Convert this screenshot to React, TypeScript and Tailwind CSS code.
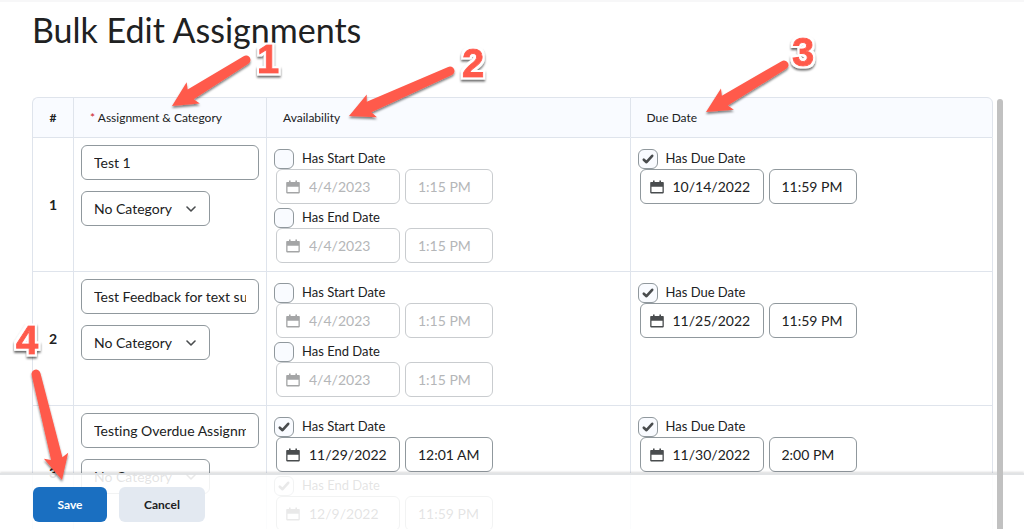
import { useState } from "react";

type DateValue = { label: string; date: string; time: string; enabled: boolean };
type Assignment = { name: string; start: DateValue; end: DateValue; due: DateValue };

const assignments: Assignment[] = [
  {
    name: "Test 1",
    start: { label: "Has Start Date", date: "4/4/2023", time: "1:15 PM", enabled: false },
    end: { label: "Has End Date", date: "4/4/2023", time: "1:15 PM", enabled: false },
    due: { label: "Has Due Date", date: "10/14/2022", time: "11:59 PM", enabled: true },
  },
  {
    name: "Test Feedback for text submission",
    start: { label: "Has Start Date", date: "4/4/2023", time: "1:15 PM", enabled: false },
    end: { label: "Has End Date", date: "4/4/2023", time: "1:15 PM", enabled: false },
    due: { label: "Has Due Date", date: "11/25/2022", time: "11:59 PM", enabled: true },
  },
  {
    name: "Testing Overdue Assignments",
    start: { label: "Has Start Date", date: "11/29/2022", time: "12:01 AM", enabled: true },
    end: { label: "Has End Date", date: "12/9/2022", time: "11:59 PM", enabled: true },
    due: { label: "Has Due Date", date: "11/30/2022", time: "2:00 PM", enabled: true },
  },
];

function CalendarIcon() {
  return (
    <svg viewBox="0 0 14 14" className="h-3.5 w-3.5 shrink-0" fill="currentColor" aria-hidden="true">
      <path d="M3 0.5h1.6V2h4.8V0.5H11V2h2a.8.8 0 0 1 .8.8V12.6a.8.8 0 0 1-.8.8H1a.8.8 0 0 1-.8-.8V2.8A.8.8 0 0 1 1 2h2zM1.5 6.7v5.4h11V6.7z" fillRule="evenodd" />
    </svg>
  );
}

function DateField({ id, value }: { id: string; value: DateValue }) {
  const [enabled, setEnabled] = useState(value.enabled);
  const [date, setDate] = useState(value.date);
  const [time, setTime] = useState(value.time);
  const tone = enabled ? "border-[#90989d] text-[#202122]" : "border-[#c9cccf] text-[#b4b6b8]";
  return (
    <div>
      <div className="flex h-6 items-start gap-2">
        <span className="mt-1 grid h-5 w-5 shrink-0">
          <input
            id={id}
            type="checkbox"
            checked={enabled}
            onChange={(e) => setEnabled(e.target.checked)}
            className="col-start-1 row-start-1 h-5 w-5 appearance-none rounded-md border border-[#90989d] bg-[#f9fbff]"
          />
          {enabled && (
            <svg viewBox="0 0 20 20" className="pointer-events-none col-start-1 row-start-1 h-5 w-5" fill="none" stroke="#494c4e" strokeWidth="2.6" strokeLinecap="round" strokeLinejoin="round" aria-hidden="true">
              <path d="M5.8 10.7 8.5 13.2 14.2 6.8" />
            </svg>
          )}
        </span>
        <label htmlFor={id} className="pt-[3px] text-[13px] leading-5 text-[#202122]">{value.label}</label>
      </div>
      <div className="flex gap-[5px] pl-0.5">
        <div className={`flex h-[35px] w-[124px] items-center gap-[9px] rounded-md border bg-white pl-[9px] ${tone}`}>
          <span className={enabled ? "text-[#494c4e]" : "text-[#a4a5a6]"}><CalendarIcon /></span>
          <input aria-label={`${value.label}: date`} value={date} disabled={!enabled} onChange={(e) => setDate(e.target.value)} className="w-full min-w-0 bg-transparent text-sm outline-none" />
        </div>
        <input aria-label={`${value.label}: time`} value={time} disabled={!enabled} onChange={(e) => setTime(e.target.value)} className={`h-[35px] w-[88px] rounded-md border bg-white px-3 text-sm outline-none ${tone}`} />
      </div>
    </div>
  );
}

function AssignmentRow({ item, index }: { item: Assignment; index: number }) {
  const [name, setName] = useState(item.name);
  const cell = "border-b border-l border-[#dfe4ec] px-[7px] pt-[7px] pb-2 align-top";
  return (
    <tr>
      <th scope="row" className="border-b border-l border-[#dfe4ec] text-center align-middle text-sm font-bold">{index + 1}</th>
      <td className={cell}>
        <div className="flex flex-col items-start gap-[11px]">
          <div className="flex h-[35px] w-full items-center rounded-md border border-[#90989d] bg-white px-3">
            <input aria-label="Assignment name" value={name} onChange={(e) => setName(e.target.value)} className="w-full min-w-0 bg-transparent text-sm outline-none" />
          </div>
          <div className="grid w-[129px] items-center">
            <select aria-label="Category" className="col-start-1 row-start-1 h-[35px] w-full appearance-none rounded-md border border-[#90989d] bg-white px-3 text-sm">
              <option>No Category</option>
            </select>
            <svg viewBox="0 0 10 6" className="pointer-events-none col-start-1 row-start-1 mr-3.5 h-1.5 w-2.5 justify-self-end" fill="none" stroke="#494c4e" strokeWidth="1.6" strokeLinecap="round" strokeLinejoin="round" aria-hidden="true">
              <path d="M1 1l4 4 4-4" />
            </svg>
          </div>
        </div>
      </td>
      <td className={cell}>
        <DateField id={`start-${index}`} value={item.start} />
        <DateField id={`end-${index}`} value={item.end} />
      </td>
      <td className="border-x border-b border-[#dfe4ec] px-[7px] pt-[7px] pb-2 align-top">
        <DateField id={`due-${index}`} value={item.due} />
      </td>
    </tr>
  );
}

type Callout = { n: string; labelX: number; labelY: number; tail: [number, number]; tip: [number, number] };

const callouts: Callout[] = [
  { n: "1", labelX: 268, labelY: 73, tail: [246, 60], tip: [172, 106] },
  { n: "2", labelX: 473, labelY: 77, tail: [450, 71], tip: [349, 116] },
  { n: "3", labelX: 803, labelY: 66, tail: [784, 65], tip: [706, 112] },
  { n: "4", labelX: 27, labelY: 354, tail: [36, 374], tip: [62, 480] },
];

function Callouts() {
  return (
    <svg width="1024" height="529" viewBox="0 0 1024 529" className="pointer-events-none absolute -top-0.5 left-0 z-30">
      <defs>
        <filter id="shadow" x="-20%" y="-20%" width="140%" height="150%">
          <feDropShadow dx="0" dy="2" stdDeviation="1" floodColor="#000" floodOpacity="0.5" />
        </filter>
        <filter id="outline" x="-50%" y="-50%" width="200%" height="200%">
          <feMorphology in="SourceAlpha" operator="dilate" radius="2" result="grown" />
          <feFlood floodColor="#fff" />
          <feComposite in2="grown" operator="in" result="edge" />
          <feMerge result="figure">
            <feMergeNode in="edge" />
            <feMergeNode in="SourceGraphic" />
          </feMerge>
          <feDropShadow in="figure" dx="0" dy="2" stdDeviation="0.8" floodColor="#000" floodOpacity="0.6" />
        </filter>
      </defs>
      {callouts.map(({ n, labelX, labelY, tail, tip }) => {
        const dx = tip[0] - tail[0];
        const dy = tip[1] - tail[1];
        const len = Math.hypot(dx, dy);
        const angle = (Math.atan2(dy, dx) * 180) / Math.PI;
        return (
          <g key={n}>
            <g filter="url(#shadow)">
              <path
                transform={`translate(${tail[0]} ${tail[1]}) rotate(${angle})`}
                d={`M0 -4.5 L${len - 22} -5.8 L${len - 25} -12.5 L${len} 0 L${len - 25} 12.5 L${len - 22} 5.8 L0 4.5 A4.5 4.5 0 0 1 0 -4.5Z`}
                fill="#ff5a4b"
              />
            </g>
            <text x={labelX} y={labelY} textAnchor="middle" fontFamily="Liberation Sans, Arial, sans-serif" fontWeight="700" fontSize="40" fill="#ff5a4b" stroke="#ff5a4b" strokeWidth="1" filter="url(#outline)">
              {n}
            </text>
          </g>
        );
      })}
    </svg>
  );
}

export default function App() {
  const head = "h-10 border-y border-l border-[#dfe4ec] bg-[#f9fbff] px-4 text-left text-xs font-normal";
  return (
    <div className="relative h-screen overflow-hidden border-t-2 border-[#f7f7f8] bg-white font-['Lato',sans-serif] text-[#202122] [font-variant-ligatures:none]">
      <h1 className="px-8 pt-[7px] text-[34px] leading-[42px]">Bulk Edit Assignments</h1>
      <main className="mt-[46px] flex gap-1 pr-[21px] pl-8">
        <table className="w-full flex-1 table-fixed border-separate border-spacing-0">
          <colgroup>
            <col className="w-[41px]" />
            <col className="w-[193px]" />
            <col />
            <col />
          </colgroup>
          <thead>
            <tr>
              <th scope="col" className="h-[41px] rounded-tl-md border-y border-l border-[#dfe4ec] bg-[#f9fbff] text-center text-xs font-bold">#</th>
              <th scope="col" className={head}><span className="text-[#cd2026]">*</span> Assignment &amp; Category</th>
              <th scope="col" className={head}>Availability</th>
              <th scope="col" className="rounded-tr-md border border-[#dfe4ec] bg-[#f9fbff] px-4 text-left text-xs font-normal">Due Date</th>
            </tr>
          </thead>
          <tbody>
            {assignments.map((item, i) => (
              <AssignmentRow key={item.name} item={item} index={i} />
            ))}
          </tbody>
        </table>
        <div className="z-20 mt-0.5 w-1.5 rounded-full bg-[#c1c1c1]" />
      </main>
      <footer className="fixed inset-x-0 bottom-0 z-10 flex h-14 gap-3 border-t-2 border-[#d9dcdf]/80 bg-white/88 px-[33px] pt-3 shadow-[0_-1px_2px_rgba(73,76,78,0.2)]">
        <button type="button" className="h-[35px] w-[74px] rounded-md bg-[#1a6fc1] text-xs font-bold text-white">Save</button>
        <button type="button" className="h-[35px] w-[86px] rounded-md bg-[#e3e9f1] text-xs font-bold">Cancel</button>
      </footer>
      <Callouts />
    </div>
  );
}
